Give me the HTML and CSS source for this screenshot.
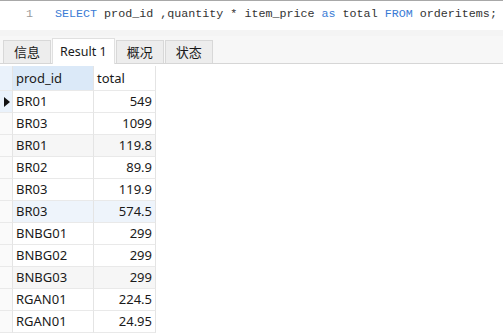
FILE: index.html
```html
<!DOCTYPE html>
<html>
    <head>
        <title>Query result</title>
        <link rel="stylesheet" href="styles.css">
    </head>
    <body>

        <!-- Editor -->
        <div class="editor">
            <div class="line">
                <span class="lineno">1</span>
                <code><span class="kw">SELECT</span> prod_id ,quantity * item_price <span class="kw">as</span> total <span class="kw">FROM</span> orderitems;</code>
            </div>
        </div>

        <!-- Tabs -->
        <div class="tabs">
            <div class="tab">信息</div>
            <div class="tab active">Result 1</div>
            <div class="tab">概况</div>
            <div class="tab">状态</div>
        </div>

        <!-- Grid -->
        <div class="grid">
            <div class="ind cur"></div>
            <div class="head sel">prod_id</div>
            <div class="head">total</div>

            <div class="ind cur"><span class="arrow"></span></div>
            <div class="cell">BR01</div><div class="cell num">549</div>

            <div class="ind"></div>
            <div class="cell">BR03</div><div class="cell num">1099</div>

            <div class="ind"></div>
            <div class="cell alt">BR01</div><div class="cell num alt">119.8</div>

            <div class="ind"></div>
            <div class="cell">BR02</div><div class="cell num">89.9</div>

            <div class="ind"></div>
            <div class="cell">BR03</div><div class="cell num">119.9</div>

            <div class="ind"></div>
            <div class="cell hi">BR03</div><div class="cell num hi">574.5</div>

            <div class="ind"></div>
            <div class="cell">BNBG01</div><div class="cell num">299</div>

            <div class="ind"></div>
            <div class="cell">BNBG02</div><div class="cell num">299</div>

            <div class="ind"></div>
            <div class="cell alt">BNBG03</div><div class="cell num alt">299</div>

            <div class="ind"></div>
            <div class="cell">RGAN01</div><div class="cell num">224.5</div>

            <div class="ind"></div>
            <div class="cell">RGAN01</div><div class="cell num">24.95</div>
        </div>

    </body>
</html>
```

FILE: styles.css
```css
body {
    margin: 0;
    background-color: white;
    font-family: "Noto Sans", "Noto Sans CJK SC", sans-serif;
    font-size: 12.5px;
    color: #1a1a1a;
}

.editor {
    height: 35px;
    border-top: 1px solid #a8a8a8;
    background: linear-gradient(#ffffff 0, #ffffff 29px, #f4f4f4 29px);
}
.line {
    display: flex;
    height: 26px;
    align-items: center;
}
.lineno {
    width: 33px;
    padding-right: 22px;
    text-align: right;
    color: #9a9a9a;
    font-family: "Liberation Mono", monospace;
    font-size: 11.7px;
}
code {
    font-family: "Liberation Mono", monospace;
    font-size: 11.7px;
    color: #333;
}
.kw {
    color: #3a7bd5;
}

.tabs {
    display: flex;
    height: 27px;
    padding-left: 3px;
    align-items: flex-end;
    background-color: #f7f7f7;
    border-bottom: 1px solid #d6d6d6;
}
.tab {
    height: 22px;
    line-height: 22px;
    padding: 0 10px;
    margin-right: 1px;
    background-color: #ededed;
    border: 1px solid #d8d8d8;
    border-bottom: none;
    font-size: 13px;
}
.tab.active {
    height: 25px;
    line-height: 25px;
    background-color: white;
    border-color: #e0e0e0;
    margin-bottom: -1px;
    padding: 0 7px;
    font-size: 12.5px;
}

.grid {
    display: grid;
    grid-template-columns: 13px 81px 62px;
    grid-template-rows: 25px;
    grid-auto-rows: 22px;
    margin-top: 2px;
}
.grid > div {
    border-right: 1px solid #e4e4e4;
    border-bottom: 1px solid #e9e9e9;
    box-sizing: border-box;
}
.ind {
    background-color: #fafafa;
    display: flex;
    align-items: center;
    justify-content: center;
}
.ind.cur {
    background-color: #eaf2fb;
}
.arrow {
    width: 0;
    height: 0;
    border-top: 5px solid transparent;
    border-bottom: 5px solid transparent;
    border-left: 6px solid #111;
    margin-left: 2px;
}
.head {
    padding-left: 3px;
    line-height: 24px;
    font-size: 13px;
}
.head.sel {
    background-color: #dbe9f8;
}
.cell {
    padding: 0 3px;
    line-height: 21px;
    font-size: 13px;
}
.num {
    text-align: right;
}
.alt {
    background-color: #f6f6f6;
}
.hi {
    background-color: #eef4fb;
}
```
